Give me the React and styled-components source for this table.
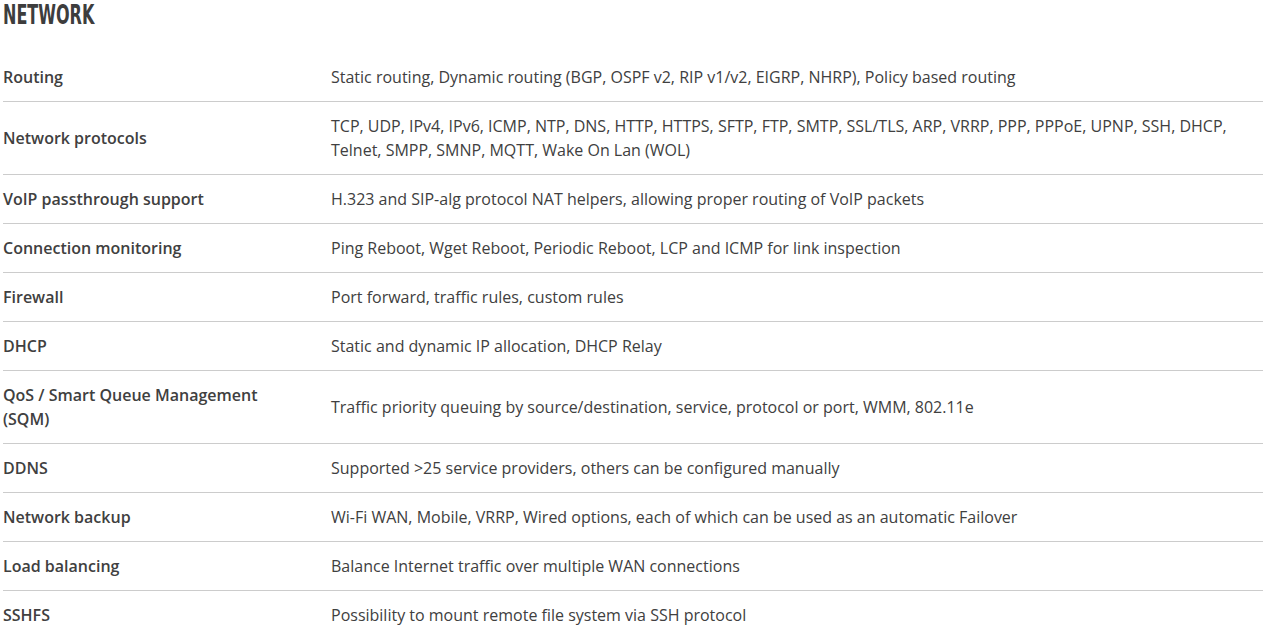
import styled, { createGlobalStyle } from "styled-components";

const GlobalStyle = createGlobalStyle`
  body {
    margin: 0;
    background: #fff;
    font-family: "Open Sans", "Liberation Sans", sans-serif;
    color: #404040;
  }
`;

const Section = styled.section`
  padding: 0 5px 0 3px;
`;

const Title = styled.h2`
  margin: 0;
  height: 53px;
  font-family: "Liberation Sans Narrow", "DejaVu Sans Condensed", sans-serif;
  font-weight: 700;
  font-size: 27px;
  line-height: 30px;
  color: #3d3d3d;
  transform: scaleX(0.66);
  transform-origin: left top;
  white-space: nowrap;
`;

const Table = styled.div`
  display: flex;
  flex-direction: column;
`;

const Row = styled.div`
  display: grid;
  grid-template-columns: 328px 1fr;
  align-items: center;
  padding: 12px 0;
  border-bottom: ${({ $last }) => ($last ? "none" : "1px solid #cccccc")};
  font-size: 16px;
  line-height: 24px;
`;

const Label = styled.div`
  font-weight: 600;
  color: #404040;
  padding-right: 36px;
`;

const Value = styled.div`
  font-weight: 400;
  color: #404040;
`;

const rows = [
  ["Routing", "Static routing, Dynamic routing (BGP, OSPF v2, RIP v1/v2, EIGRP, NHRP), Policy based routing"],
  ["Network protocols", "TCP, UDP, IPv4, IPv6, ICMP, NTP, DNS, HTTP, HTTPS, SFTP, FTP, SMTP, SSL/TLS, ARP, VRRP, PPP, PPPoE, UPNP, SSH, DHCP, Telnet, SMPP, SMNP, MQTT, Wake On Lan (WOL)"],
  ["VoIP passthrough support", "H.323 and SIP-alg protocol NAT helpers, allowing proper routing of VoIP packets"],
  ["Connection monitoring", "Ping Reboot, Wget Reboot, Periodic Reboot, LCP and ICMP for link inspection"],
  ["Firewall", "Port forward, traffic rules, custom rules"],
  ["DHCP", "Static and dynamic IP allocation, DHCP Relay"],
  ["QoS / Smart Queue Management (SQM)", "Traffic priority queuing by source/destination, service, protocol or port, WMM, 802.11e"],
  ["DDNS", "Supported >25 service providers, others can be configured manually"],
  ["Network backup", "Wi-Fi WAN, Mobile, VRRP, Wired options, each of which can be used as an automatic Failover"],
  ["Load balancing", "Balance Internet traffic over multiple WAN connections"],
  ["SSHFS", "Possibility to mount remote file system via SSH protocol"],
];

export default function App() {
  return (
    <>
      <GlobalStyle />
      <Section>
        <Title>NETWORK</Title>
        <Table>
          {rows.map(([label, value], i) => (
            <Row key={label} $last={i === rows.length - 1}>
              <Label>{label}</Label>
              <Value>{value}</Value>
            </Row>
          ))}
        </Table>
      </Section>
    </>
  );
}
